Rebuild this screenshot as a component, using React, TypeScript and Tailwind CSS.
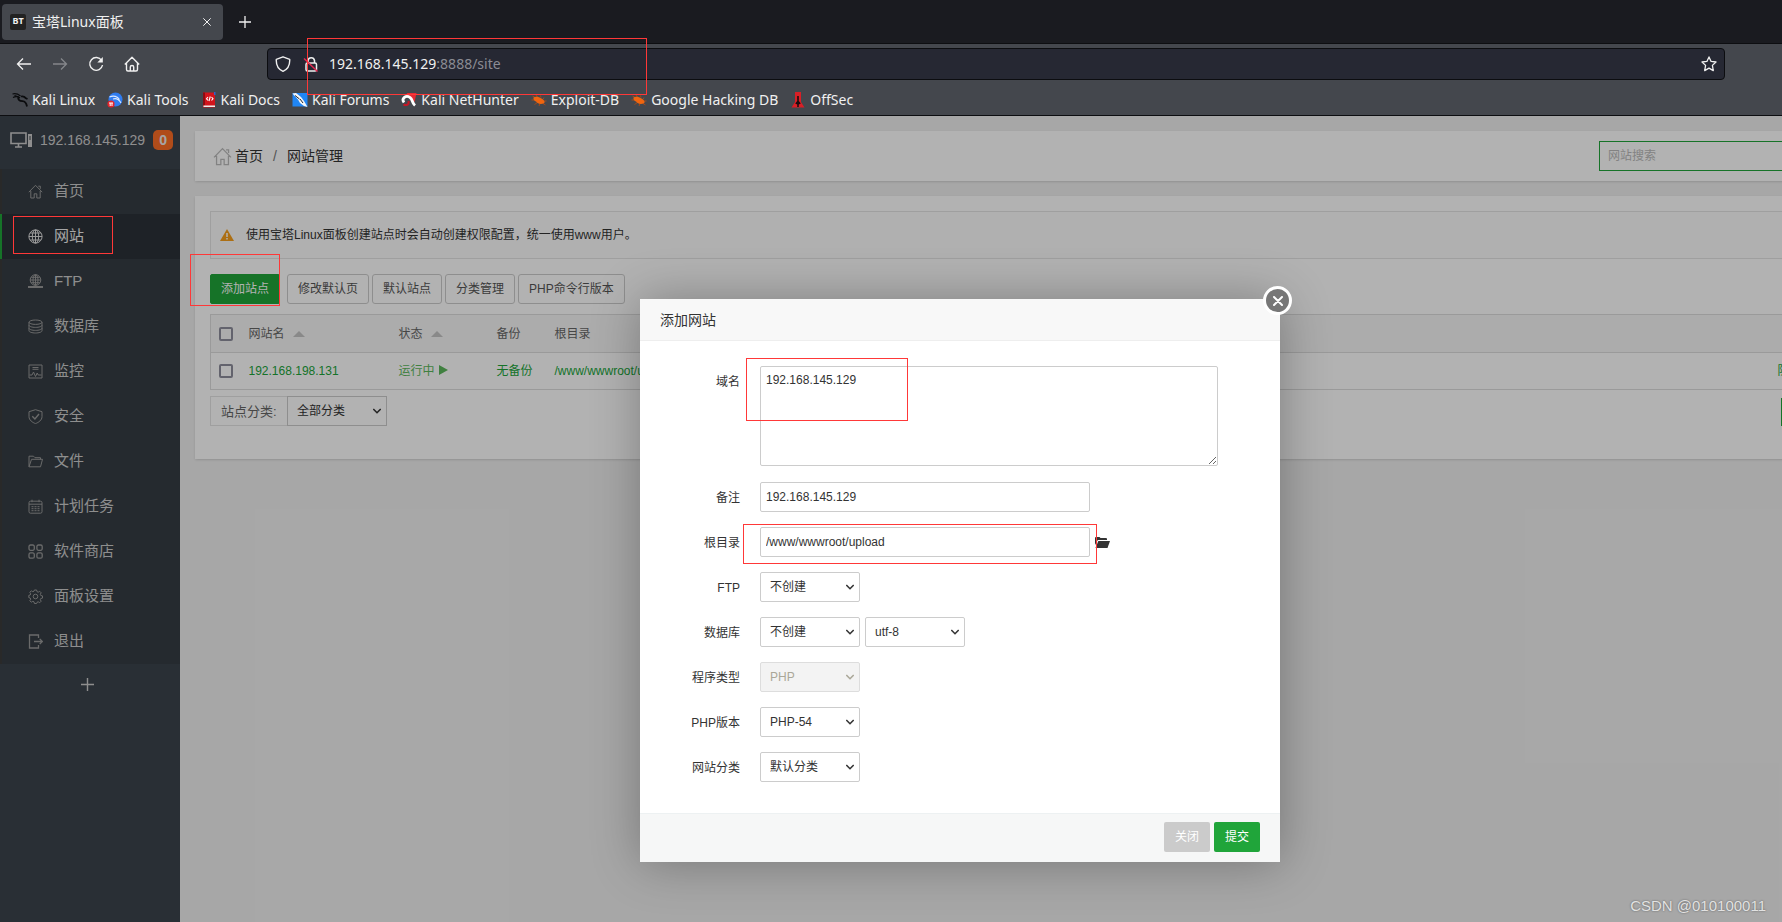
import { useState } from 'react';
import type { ReactNode } from 'react';
import clsx from 'clsx';

type IconName =
  | 'home'
  | 'globe'
  | 'ftp'
  | 'database'
  | 'monitor'
  | 'shield'
  | 'folder'
  | 'calendar'
  | 'apps'
  | 'gear'
  | 'exit';

const icons: Record<IconName, ReactNode> = {
  home: <path d="M.8 8.2 7.5 1.3l6.7 6.9M2.8 7v7h3.4V9.8h2.6V14h3.4V7M10.3 2.2h2v2.6" />,
  globe: (
    <>
      <circle cx="7.5" cy="7.5" r="6.6" />
      <ellipse cx="7.5" cy="7.5" rx="3.2" ry="6.6" />
      <path d="M7.5.9v13.2M.9 7.5h13.2M2.2 4h10.6M2.2 11h10.6" />
    </>
  ),
  ftp: (
    <>
      <circle cx="7.5" cy="6" r="5.3" />
      <ellipse cx="7.5" cy="6" rx="2.5" ry="5.3" />
      <path d="M7.5.7v10.6M2.2 6h10.6M3.2 3.3h8.6M3.2 8.7h8.6" />
      <path d="M0 13h15M5.5 13h4" strokeWidth="1.8" />
    </>
  ),
  database: (
    <>
      <ellipse cx="7.5" cy="3.2" rx="6.5" ry="2.2" />
      <path d="M1 3.2v8.6C1 13 4 14 7.5 14s6.5-1 6.5-2.2V3.2M1 6.2c0 1.2 3 2.2 6.5 2.2S14 7.4 14 6.2M1 9.2c0 1.2 3 2.2 6.5 2.2s6.5-1 6.5-2.2" />
    </>
  ),
  monitor: (
    <>
      <path d="M1 1h13v13H1zM4.5 3.5h6M4.5 5.3h6" />
      <path d="M1.500 11h2.500l1.500-3 2 4.500L9.200 9l1 2h3.300" />
    </>
  ),
  shield: (
    <>
      <path d="M7.5.7 14 2.7v5c0 3.4-3.5 5.8-6.5 6.9C4.5 13.500 1 11.100 1 7.700v-5z" />
      <path d="m4.300 7.200 2.600 2.700L11 5" strokeWidth="1.4" />
    </>
  ),
  folder: <path d="M1 12.800V2.200h4.500L7 3.700h5.500v1.600M1 12.800 3.500 5.300h11l-2 7.500z" />,
  calendar: (
    <>
      <rect x="1" y="2.2" width="13" height="12" rx="1.5" />
      <path d="M1 5.200h13M4 .7v2.500M11 .7v2.500" />
      <path d="M3.500 7.700h8M3.500 9.700h8M3.500 11.700h8" strokeDasharray="2 1" />
    </>
  ),
  apps: (
    <g strokeWidth="1.3">
      <rect x="1" y="1" width="5.3" height="5.3" rx="1.5" />
      <rect x="8.9" y="1" width="5.3" height="5.3" rx="1.5" />
      <rect x="1" y="8.9" width="5.3" height="5.3" rx="1.5" />
      <rect x="8.9" y="8.9" width="5.3" height="5.3" rx="1.5" />
    </g>
  ),
  gear: (
    <>
      <circle cx="7.5" cy="7.5" r="2.3" />
      <path d="m6.4 1 2.2 0 .4 1.700 1.200.5 1.500-.9 1.500 1.500-.9 1.500.5 1.200 1.700.4v2.200l-1.700.4-.5 1.200.9 1.500-1.500 1.500-1.500-.9-1.200.5-.4 1.200H6.400L6 12.800l-1.200-.5-1.500.9-1.500-1.500.9-1.500-.5-1.200L.8 8.600V6.400L2.200 6l.5-1.200-.9-1.500 1.500-1.500 1.500.9L6 2.200z" />
    </>
  ),
  exit: <path d="M10.500 4V1h-9v13h9v-3M6 7.500h8.200M11.700 4.900l2.600 2.600-2.600 2.600" strokeWidth="1.3" />,
};

function MenuIcon({ name, className }: { name: IconName; className?: string }) {
  return (
    <svg viewBox="0 0 15 15" className={clsx('shrink-0', className)} fill="none" stroke="currentColor" aria-hidden="true">
      {icons[name]}
    </svg>
  );
}

const menu: { label: string; icon: IconName }[] = [
  { label: '首页', icon: 'home' },
  { label: '网站', icon: 'globe' },
  { label: 'FTP', icon: 'ftp' },
  { label: '数据库', icon: 'database' },
  { label: '监控', icon: 'monitor' },
  { label: '安全', icon: 'shield' },
  { label: '文件', icon: 'folder' },
  { label: '计划任务', icon: 'calendar' },
  { label: '软件商店', icon: 'apps' },
  { label: '面板设置', icon: 'gear' },
  { label: '退出', icon: 'exit' },
];

const bug = (
  <>
    <path d="M1.500 4 5 6M.5 8h4M5 3l2 3M9.500 3.500l.5 2M13 5.500l-1 2M15.500 9h-3M3.500 12.500l3-2M8 14l1-2.500M14.500 13l-2.500-1.500" stroke="#a14a1c" />
    <path d="M2.500 5.500C4 4 8 4.500 10.500 6.500c2.500 1.500 4 3.500 2.500 4.800C10 12.500 6.500 12 5 9.500 3.500 9 2 7.500 2.500 5.500z" fill="#f0650f" />
  </>
);

const bookmarks: { label: string; icon: ReactNode }[] = [
  {
    label: 'Kali Linux',
    icon: (
      <>
        <path d="M.5 2c3-.8 5.500 0 8 2M1 5.500c3-1.500 5-1 7 .5M2.500 3.500 7 5" stroke="#0b0c0e" strokeWidth="1.200" />
        <path d="M7 5c-2 2 .5 4 3.500 4.200 2.500.2 4 2.500 4.500 5.300M9 4.500c2-.5 3.500 0 5 1.800l1.500.7" stroke="#0b0c0e" strokeWidth="1.800" />
      </>
    ),
  },
  {
    label: 'Kali Tools',
    icon: (
      <>
        <circle cx="8.500" cy="7.500" r="7" fill="#2f7cf0" />
        <path d="M2.500 5c4-2 8-.5 10 2.500M6 7c3-1 6 .5 8 4" stroke="#dce9ff" strokeWidth="1.100" />
        <circle cx="4" cy="12" r="3.600" fill="#e3242b" />
        <path d="M2 11h4M3.200 11v3M5 11v3" stroke="#fff" />
      </>
    ),
  },
  {
    label: 'Kali Docs',
    icon: (
      <>
        <path d="M2 .5h12v15H2z" fill="#d3141c" />
        <path d="M2 .5h2v13H2z" fill="#8b0c12" />
        <path d="M2.500 13.500H14V15H2.500z" fill="#eee" />
        <path d="M13 0h1.500v3H13z" fill="#3461c8" />
        <path d="M7 5 5.500 6.700 7 8.500M10.500 5 12 6.700l-1.500 1.800M9.300 4.500 8 9" stroke="#fff" strokeWidth="1.100" />
      </>
    ),
  },
  {
    label: 'Kali Forums',
    icon: (
      <>
        <path d="M.5 1h15v13.500H.5z" fill="#2086f5" />
        <path d="M.5 1.500 4 1l5 4 3 4 3.500 6-3.500-1-4-3-2-3.500z" fill="#f4f6f8" />
        <path d="m3 3.500 4.500 3.500M8 7l3 4" stroke="#20242b" />
      </>
    ),
  },
  {
    label: 'Kali NetHunter',
    icon: (
      <>
        <path d="M5.500 1h10l-2 9z" fill="#e52a33" />
        <path d="M3 10.500c-3-4 2-8 6-5 3 2 1.500 5 5 8" stroke="#fff" strokeWidth="2.800" />
        <path d="M2.500 12.500c3 1.500 6 0 5-3.500" stroke="#c41725" strokeWidth="2" />
      </>
    ),
  },
  { label: 'Exploit-DB', icon: bug },
  { label: 'Google Hacking DB', icon: bug },
  {
    label: 'OffSec',
    icon: (
      <>
        <path d="M5 0h6v10l3.500 5.500h-13L5 10z" fill="#d91f26" />
        <path d="M7.200 4h1.600v5l2 2.500-2 1V15H7.200v-2.500l-2-1 2-2.500z" fill="#1a0d10" />
      </>
    ),
  },
];

function BrowserChrome() {
  return (
    <header className="bg-[#44474d] font-['Noto_Sans','Noto_Sans_CJK_SC',sans-serif] text-sm text-[#f0f0f0]">
      <div className="flex h-11 items-center border-b border-[#0d0e11] bg-[#1a1b20] pl-0.5">
        <div className="flex h-9 w-[221px] items-center rounded bg-[#44474d] px-2">
          <span className="flex size-4 items-center justify-center rounded-xs bg-[#222] text-[9px] font-bold" aria-hidden="true">
            BT
          </span>
          <span className="ml-1.5 flex-1 whitespace-nowrap">宝塔Linux面板</span>
          <button type="button" aria-label="Close tab" className="p-1">
            <svg viewBox="0 0 8 8" className="size-2" stroke="currentColor">
              <path d="m.3.3 7.400 7.400M7.700.3.3 7.700" />
            </svg>
          </button>
        </div>
        <button type="button" aria-label="New tab" className="ml-4">
          <svg viewBox="0 0 12 12" className="size-3" stroke="currentColor" strokeWidth="1.3">
            <path d="M6 0v12M0 6h12" />
          </svg>
        </button>
      </div>

      <div className="flex items-center pt-1 pr-[57px] pl-4">
        <nav className="flex w-[251px] items-center gap-5">
          <button type="button" aria-label="Back">
            <svg viewBox="0 0 16 16" className="size-4" fill="none" stroke="currentColor" strokeWidth="1.3">
              <path d="M15 8H1.500M7 2.500 1.500 8 7 13.500" />
            </svg>
          </button>
          <button type="button" aria-label="Forward" className="text-[#85878b]" disabled>
            <svg viewBox="0 0 16 16" className="size-4" fill="none" stroke="currentColor" strokeWidth="1.3">
              <path d="M1 8h13.500M9 2.500 14.500 8 9 13.500" />
            </svg>
          </button>
          <button type="button" aria-label="Reload">
            <svg viewBox="0 0 16 16" className="size-4" fill="none" stroke="currentColor" strokeWidth="1.4">
              <path d="M13.600 4.500A6.400 6.400 0 1 0 14.500 9" />
              <path d="M14.800 1v5.500H9.300z" fill="currentColor" stroke="none" />
            </svg>
          </button>
          <button type="button" aria-label="Home">
            <svg viewBox="0 0 16 16" className="size-4" fill="none" stroke="currentColor" strokeWidth="1.4" strokeLinejoin="round">
              <path d="M.8 8.500 8 1.300l7.200 7.200M2.500 7v6.500q0 1.500 1.500 1.500h8q1.500 0 1.500-1.500V7M6.300 15v-4q0-1.500 1.700-1.500T9.700 11v4" />
            </svg>
          </button>
        </nav>
        <div className="flex h-8 flex-1 items-center rounded border border-[#0c0d10] bg-[#262833] px-[7px]">
          <svg viewBox="0 0 16 16" className="size-4" fill="none" stroke="currentColor" strokeWidth="1.4" strokeLinejoin="round" aria-hidden="true">
            <path d="M8 .8 14.700 3.300c.3 5.200-1.500 9.700-6.700 12C2.800 13 1 8.500 1.300 3.300z" />
          </svg>
          <svg viewBox="0 0 16 16" className="ml-3 size-4" fill="none" stroke="currentColor" strokeWidth="1.5" aria-hidden="true">
            <rect x="3" y="7" width="10.5" height="8" rx="1.5" />
            <path d="M5 7V4.500a3.300 3.300 0 0 1 6.500 0V7" />
            <path d="m1 2.500 13.500 13" stroke="#e22850" />
          </svg>
          <p className="ml-2.5 flex-1">
            192.168.145.129<span className="text-[#8b8c93]">:8888/site</span>
          </p>
          <button type="button" aria-label="Bookmark this page">
            <svg viewBox="0 0 16 16" className="size-4" fill="none" stroke="currentColor" strokeWidth="1.3" strokeLinejoin="round">
              <path d="m8 .9 2.100 4.500 4.900.6-3.600 3.400.9 5.200L8 12.100l-4.300 2.500.9-5.200L1 6l4.900-.6z" />
            </svg>
          </button>
        </div>
      </div>

      <ul className="flex h-9 items-center gap-3 border-b border-[#0d0e11] pt-1 pl-3">
        {bookmarks.map((item) => (
          <li key={item.label}>
            <a href="#" className="flex items-center gap-1 whitespace-nowrap">
              <svg viewBox="0 0 16 16" className="size-4" fill="none" aria-hidden="true">
                {item.icon}
              </svg>
              {item.label}
            </a>
          </li>
        ))}
      </ul>
    </header>
  );
}

function Sidebar() {
  return (
    <aside className="w-[180px] shrink-0 bg-[#3c444d] text-[#ccc]">
      <div className="flex h-[53px] items-center pb-1.5 pl-2.5 text-sm">
        <svg viewBox="0 0 22 16" className="h-4 w-[22px]" fill="none" stroke="currentColor" aria-hidden="true">
          <path d="M1 1h15v10.500H1zM8.500 11.500V15M5 15h7" strokeWidth="1.6" />
          <path d="M18 2h4v13h-4z" fill="currentColor" stroke="none" />
          <path d="M19 5h2M19 7h2" stroke="#3c444d" />
        </svg>
        <span className="ml-2">192.168.145.129</span>
        <span className="ml-2 flex size-5 items-center justify-center rounded-[5px] bg-[#fc6d26] font-bold text-[#eee]">0</span>
      </div>
      <nav>
        <ul className="bg-[#353d44]">
          {menu.map(({ label, icon }, i) => (
            <li key={label}>
              <a
                href="#"
                className={clsx(
                  'flex h-[45px] items-center border-l-2 pl-[26px] text-[15px]',
                  i === 1 ? 'border-[#20a53a] bg-[#2c3138] text-[#eee]' : 'border-[#3c3c3c]'
                )}
              >
                <MenuIcon name={icon} className={clsx('mr-[11px] size-[15px]', i === 1 ? 'text-[#ddd]' : 'text-[#999]')} />
                {label}
              </a>
            </li>
          ))}
        </ul>
      </nav>
      <button type="button" aria-label="添加菜单" className="flex h-10 w-full items-center justify-center pr-1.5">
        <svg viewBox="0 0 13 13" className="size-[13px]" stroke="currentColor" strokeWidth="1.4">
          <path d="M6.500 0v13M0 6.500h13" />
        </svg>
      </button>
    </aside>
  );
}

function SortArrow() {
  return (
    <svg viewBox="0 0 12 6" className="ml-2 inline-block h-1.5 w-3 align-middle" fill="#c4c4c4" aria-hidden="true">
      <path d="M0 6 6 0l6 6z" />
    </svg>
  );
}

function Checkbox({ label }: { label: string }) {
  return (
    <input
      type="checkbox"
      aria-label={label}
      className="block size-3.5 appearance-none rounded-xs border-2 border-[#8f8f9d] checked:bg-[#20a53a]"
    />
  );
}

interface SelectProps {
  id: string;
  options: string[];
  label?: string;
  disabled?: boolean;
  className?: string;
}

function Select({ id, options, label, disabled, className }: SelectProps) {
  return (
    <div className={clsx('relative w-[100px]', disabled ? 'text-[#aaa798]' : 'text-[#333]')}>
      <select
        id={id}
        aria-label={label}
        disabled={disabled}
        className={clsx(
          'block h-[30px] w-full appearance-none border pl-[9px] text-xs',
          disabled ? 'border-[#ddd] bg-[#f3f3f3]' : 'border-[#ccc] bg-white',
          className ?? 'rounded-xs'
        )}
      >
        {options.map((option) => (
          <option key={option}>{option}</option>
        ))}
      </select>
      <svg
        viewBox="0 0 8 6"
        className="pointer-events-none absolute top-3 right-1.5 h-1.5 w-2"
        fill="none"
        stroke="currentColor"
        strokeWidth="1.6"
        aria-hidden="true"
      >
        <path d="m.3 1 3.700 3.700L7.700 1" />
      </svg>
    </div>
  );
}

const actions = ['修改默认页', '默认站点', '分类管理', 'PHP命令行版本'];

function SitePage() {
  return (
    <main className="flex min-w-0 flex-1 flex-col gap-[15px] bg-[#f0f0f0] p-[15px]">
      <section className="flex h-[50px] items-center justify-between bg-white px-[18px] text-sm text-[#333] shadow-sm">
        <div className="flex items-center">
          <MenuIcon name="home" className="mr-[3px] size-[19px] text-[#bbb]" />
          <a href="#">首页</a>
          <span className="px-2.5 text-[#777]">/</span>
          <span>网站管理</span>
        </div>
        <input
          type="text"
          aria-label="网站搜索"
          placeholder="网站搜索"
          className="h-[30px] w-[288px] border border-[#20a53a] px-2 text-xs placeholder:text-[#bbb]"
        />
      </section>

      <section className="bg-white p-[15px] pb-[33px] text-xs shadow-sm">
        <div className="flex h-12 items-center border border-[#e4e4e4] bg-[#fcfcfc] pl-[9px] text-[#333]">
          <svg viewBox="0 0 14 12" className="mr-3 h-3 w-3.5" aria-hidden="true">
            <path d="m7 0 7 12H0z" fill="#f7a01d" />
            <path d="M7 4v4M7 9v1.500" stroke="#fff" strokeWidth="1.5" />
          </svg>
          使用宝塔Linux面板创建站点时会自动创建权限配置，统一使用www用户。
        </div>

        <div className="mt-[15px] flex gap-[3px] text-[#555]">
          <button type="button" className="mr-1 h-[30px] rounded-xs border border-[#20a53a] bg-[#20a53a] px-2.5 text-white">
            添加站点
          </button>
          {actions.map((action) => (
            <button key={action} type="button" className="h-[30px] rounded-[3px] border border-[#ccc] bg-white px-2.5">
              {action}
            </button>
          ))}
        </div>

        <table className="mt-2.5 w-full table-fixed border border-[#ddd] text-left whitespace-nowrap">
          <thead>
            <tr className="h-[38px] border-b border-[#ddd] bg-[#f6f6f6] text-[#666] [&>th]:px-2 [&>th]:font-normal">
              <th className="w-[30px]">
                <Checkbox label="全选" />
              </th>
              <th className="w-[150px]">
                网站名
                <SortArrow />
              </th>
              <th className="w-[98px]">
                状态
                <SortArrow />
              </th>
              <th className="w-[58px]">备份</th>
              <th>根目录</th>
              <th className="w-[120px] text-right">操作</th>
            </tr>
          </thead>
          <tbody>
            <tr className="h-[37px] text-[#20a53a] [&>td]:px-2">
              <td>
                <Checkbox label="192.168.198.131" />
              </td>
              <td>
                <a href="#">192.168.198.131</a>
              </td>
              <td className="text-[#5cb85c]">
                <a href="#">
                  运行中
                  <svg viewBox="0 0 9 10" className="ml-1 inline-block h-2.5 w-[9px] align-baseline" fill="currentColor" aria-hidden="true">
                    <path d="m0 0 9 5-9 5z" />
                  </svg>
                </a>
              </td>
              <td>
                <a href="#">无备份</a>
              </td>
              <td>
                <a href="#">/www/wwwroot/upload</a>
              </td>
              <td>
                <a href="#">防火墙</a> | <a href="#">设置</a>
              </td>
            </tr>
          </tbody>
        </table>

        <div className="mt-1.5 flex justify-between">
          <div className="flex">
            <label
              htmlFor="category"
              className="flex h-[30px] w-[77px] items-center border border-r-0 border-[#e4e4e4] pt-0.5 pl-2.5 text-[13px] text-[#666]"
            >
              站点分类:
            </label>
            <Select id="category" options={['全部分类']} className="border-[#bbb]" />
          </div>
          <button type="button" aria-label="第1页" className="mt-0.5 h-7 w-[109px] bg-[#20a53a] text-right text-white">
            1
          </button>
        </div>
      </section>
    </main>
  );
}

function Row({ id, label, children }: { id: string; label: string; children: ReactNode }) {
  return (
    <div className="flex">
      <label htmlFor={id} className="mr-5 h-[30px] w-20 text-right leading-8">
        {label}
      </label>
      <div className="flex gap-[5px]">{children}</div>
    </div>
  );
}

function AddSiteDialog({ onClose }: { onClose: () => void }) {
  return (
    <div
      role="dialog"
      aria-labelledby="dialog-title"
      className="relative w-[640px] rounded-xs bg-white text-xs text-[#333] shadow-[1px_1px_50px_rgba(0,0,0,0.3)]"
    >
      <h2 id="dialog-title" className="h-[42px] border-b border-[#eee] bg-[#f8f8f8] px-5 text-sm leading-[42px]">
        添加网站
      </h2>
      <button
        type="button"
        aria-label="关闭窗口"
        onClick={onClose}
        className="absolute -top-[13px] -right-3 flex size-[29px] items-center justify-center rounded-full border-3 border-white bg-[#777]"
      >
        <svg viewBox="0 0 10 10" className="size-2.5" stroke="#fff" strokeWidth="2" strokeLinecap="round">
          <path d="m1 1 8 8M9 1 1 9" />
        </svg>
      </button>

      <form className="flex flex-col gap-[15px] px-5 pt-[25px] pb-[31px]">
        <Row id="domain" label="域名">
          <textarea
            id="domain"
            defaultValue="192.168.145.129"
            className="mb-px block h-[100px] w-[458px] rounded-xs border border-[#ccc] px-[5px] py-1 leading-[18px]"
          />
        </Row>
        <Row id="remark" label="备注">
          <input id="remark" type="text" defaultValue="192.168.145.129" className="h-[30px] w-[330px] rounded-xs border border-[#ccc] px-[5px]" />
        </Row>
        <Row id="root-path" label="根目录">
          <input id="root-path" type="text" defaultValue="/www/wwwroot/upload" className="h-[30px] w-[330px] rounded-xs border border-[#ccc] px-[5px]" />
          <button type="button" aria-label="选择目录">
            <svg viewBox="0 0 15 11" className="h-[11px] w-[15px]" fill="#333">
              <path d="M0 8V1q0-1 1-1h3.500l1 1H11q1 0 1 1v1H2.800z" />
              <path d="M3.300 4H15l-2.500 7H.5z" />
            </svg>
          </button>
        </Row>
        <Row id="ftp" label="FTP">
          <Select id="ftp" options={['不创建', '创建']} />
        </Row>
        <Row id="sql" label="数据库">
          <Select id="sql" options={['不创建', 'MySQL']} />
          <Select id="charset" label="编码" options={['utf-8', 'utf8mb4', 'gbk', 'big5']} />
        </Row>
        <Row id="program" label="程序类型">
          <Select id="program" options={['PHP']} disabled />
        </Row>
        <Row id="php-version" label="PHP版本">
          <Select id="php-version" options={['PHP-54', '纯静态']} />
        </Row>
        <Row id="site-type" label="网站分类">
          <Select id="site-type" options={['默认分类']} />
        </Row>
      </form>

      <div className="flex h-[49px] items-center justify-end gap-1 border-t border-[#edf1f2] bg-[#f6f7f7] px-5 pb-0.5 text-white">
        <button type="button" onClick={onClose} className="h-[30px] rounded-xs bg-[#cbcbcb] px-[11px]">
          关闭
        </button>
        <button type="button" className="h-[30px] rounded-xs bg-[#20a53a] px-[11px]">
          提交
        </button>
      </div>
    </div>
  );
}

// Highlight frames drawn over the whole window
const marks = [
  'left-[307px] top-[38px] w-[340px] h-[57px]',
  'left-[13px] top-[216px] w-[100px] h-[38px]',
  'left-[190px] top-[254px] w-[90px] h-[52px]',
  'left-[746px] top-[358px] w-[162px] h-[63px]',
  'left-[743px] top-[524px] w-[354px] h-[40px]',
];

export default function App() {
  const [open, setOpen] = useState(true);

  return (
    <div className="relative flex min-h-screen flex-col overflow-hidden font-['Liberation_Sans','Noto_Sans_CJK_SC',sans-serif]">
      <BrowserChrome />
      {/* the panel is wider than the window, its right edge is cut off */}
      <div className="relative flex w-[calc(100%+138px)] flex-1">
        <Sidebar />
        <SitePage />
        {open && (
          <div className="absolute inset-0 flex items-start justify-center bg-black/30 pt-[183px]">
            <AddSiteDialog onClose={() => setOpen(false)} />
          </div>
        )}
      </div>
      {marks.map((mark) => (
        <div key={mark} className={clsx('pointer-events-none absolute border border-[#ff3838]', mark)} />
      ))}
      <p className="absolute right-4 bottom-1.5 text-[15px] leading-5 text-[#e2e2e2] [text-shadow:0_0_2px_#555]">CSDN @010100011</p>
    </div>
  );
}
